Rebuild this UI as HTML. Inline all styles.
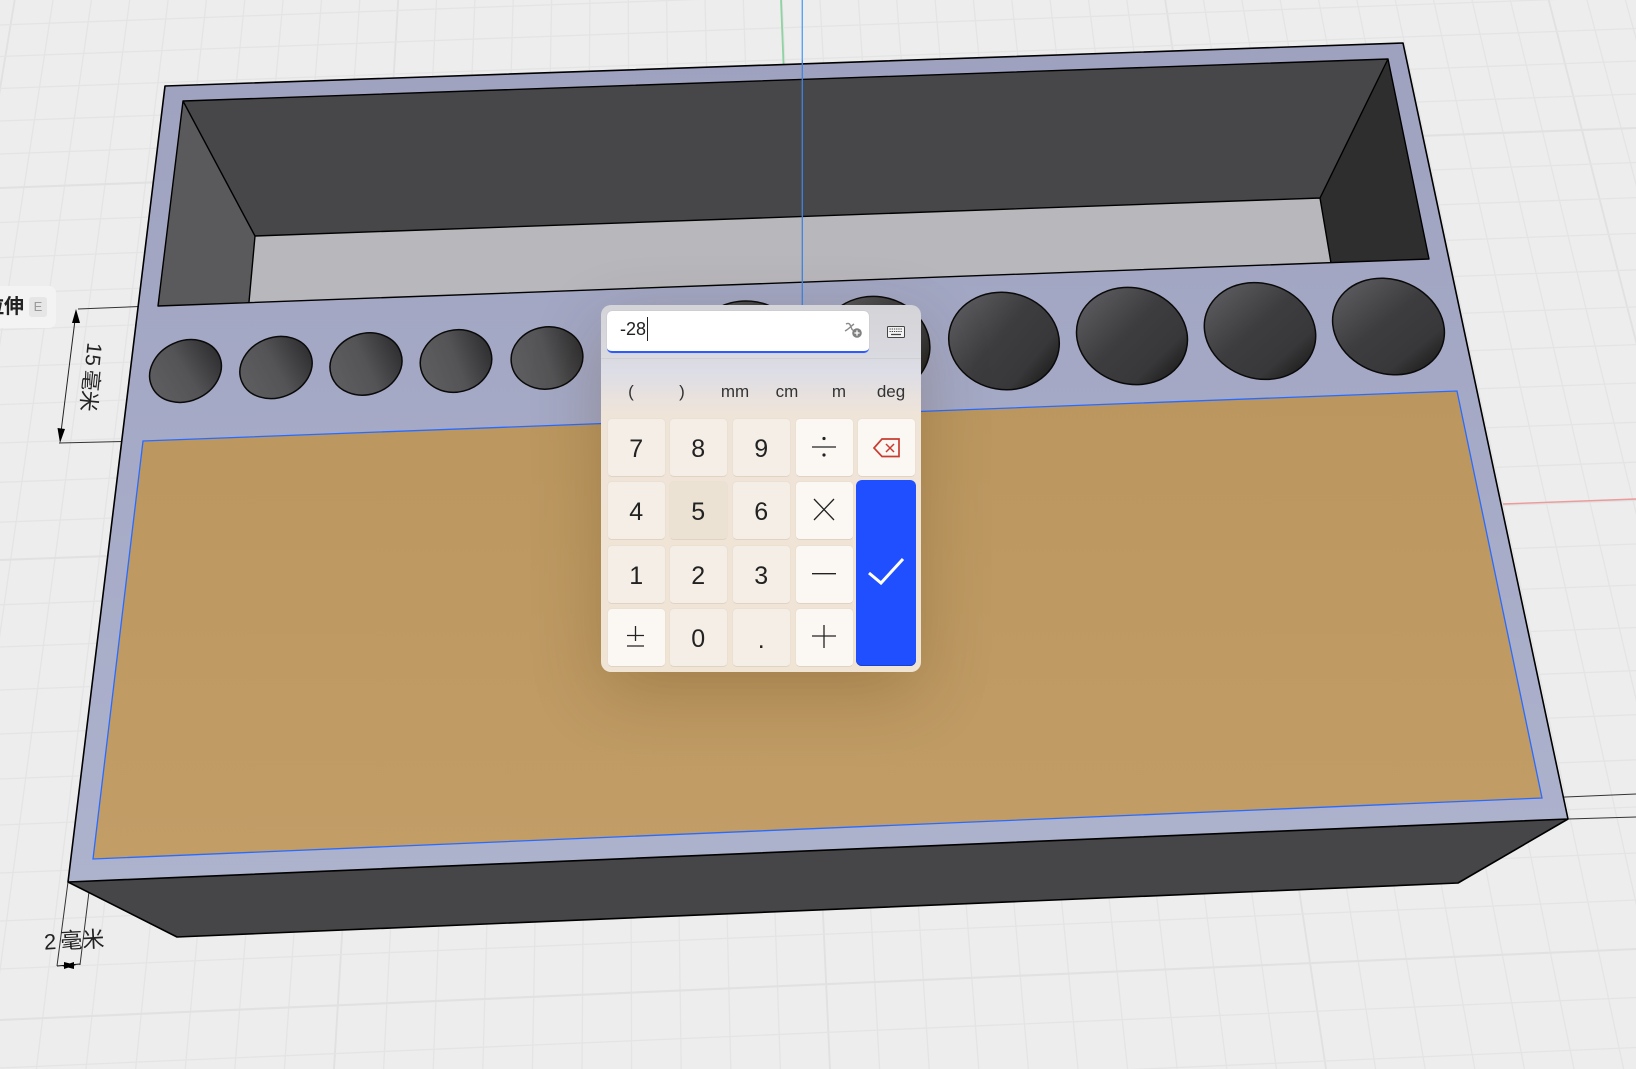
<!DOCTYPE html>
<html><head><meta charset="utf-8"><style>
html,body{margin:0;padding:0;width:1636px;height:1069px;overflow:hidden;background:#ededed}
body{position:relative;font-family:"Liberation Sans","Noto Sans CJK SC",sans-serif}
svg.s{position:absolute;left:0;top:0}
.t{position:absolute;white-space:nowrap;color:#222}
#panel{position:absolute;left:601px;top:305px;width:320px;height:367px;border-radius:10px;overflow:hidden;background:linear-gradient(180deg,#d4d4d8 0,#d8d8de 12%,#dcdde6 18%,#e8e1de 25%,#efe4d8 30%,#f0e4d5 100%);box-shadow:0 22px 70px rgba(70,40,0,.24)}
.k{position:absolute;width:58.5px;height:59px;box-sizing:border-box;border-radius:5px;background:#f4eee6;border:1px solid #ebe0d2;border-bottom-color:#dfd3c3;color:#222;font-size:25px;line-height:60px;text-align:center}
.o{background:#fbf8f4}
.u{position:absolute;top:77px;font-size:17px;line-height:20px;color:#333;transform:translateX(-50%)}
</style></head><body>
<svg class="s" width="1636" height="1069" viewBox="0 0 1636 1069" fill="none">
<defs>
<linearGradient id="band" x1="0" y1="43" x2="0" y2="882" gradientUnits="userSpaceOnUse"><stop offset="0" stop-color="#9ea2bf"/><stop offset="1" stop-color="#adb2cd"/></linearGradient>
<linearGradient id="or" x1="0" y1="391" x2="0" y2="859" gradientUnits="userSpaceOnUse"><stop offset="0" stop-color="#bb975f"/><stop offset="1" stop-color="#c29d66"/></linearGradient>
<linearGradient id="lg" x1="0" y1=".25" x2="1" y2=".75"><stop offset="0" stop-color="#5c5c60"/><stop offset=".45" stop-color="#3d3d3f"/><stop offset=".78" stop-color="#38383a"/><stop offset="1" stop-color="#1d1d1d"/></linearGradient>
<linearGradient id="sm" x1="0" y1=".55" x2="1" y2=".45"><stop offset="0" stop-color="#5e5e60"/><stop offset=".5" stop-color="#545456"/><stop offset="1" stop-color="#303032"/></linearGradient>
</defs>
<path stroke="#e4e4e4" stroke-width="1.3" d="M53 0L-112.4 1069M91.4 0L-62.8 1069M129.7 0L-13.2 1069M168.1 0L36.4 1069M206.4 0L86 1069M244.8 0L135.6 1069M283.1 0L185.2 1069M321.5 0L234.8 1069M359.8 0L284.4 1069M436.5 0L383.6 1069M474.9 0L433.2 1069M513.2 0L482.8 1069M551.6 0L532.4 1069M589.9 0L582 1069M628.3 0L631.6 1069M666.6 0L681.2 1069M705 0L730.8 1069M743.3 0L780.4 1069M820 0L879.6 1069M858.4 0L929.2 1069M896.7 0L978.8 1069M935.1 0L1028.4 1069M973.4 0L1078 1069M1011.8 0L1127.6 1069M1050.1 0L1177.2 1069M1088.5 0L1226.8 1069M1126.8 0L1276.4 1069M1203.5 0L1375.6 1069M1241.9 0L1425.2 1069M1280.2 0L1474.8 1069M1318.6 0L1524.4 1069M1356.9 0L1574 1069M1395.3 0L1623.6 1069M1433.6 0L1673.2 1069M1472 0L1722.8 1069M1510.3 0L1772.4 1069M1587 0L1871.6 1069M1625.4 0L1921.2 1069"/>
<path stroke="#e1e1e1" stroke-width="1.9" d="M14.7 0L-162 1069M398.2 0L334 1069M781.7 0L830 1069M1165.2 0L1326 1069M1548.7 0L1822 1069"/>
<path stroke="#e4e4e4" stroke-width="1.3" d="M0 25L1636 -35M0 56.5L1636 -3.5M0 88.5L1636 28.5M0 121L1636 61M0 154L1636 94M0 222.5L1636 162.5M0 257.6L1636 197.6M0 293.4L1636 233.4M0 329.8L1636 269.8M0 366.9L1636 306.9M0 404.6L1636 344.6M0 443L1636 383M0 482.3L1636 422.3M0 522.2L1636 462.2M0 604.8L1636 544M0 647L1636 585M0 690L1636 627.5M0 734L1636 670.6M0 779L1636 714.7M0 825L1636 759.8M0 873L1636 807M0 921L1636 853M0 969L1636 900M0 1068L1636 997.5M0 1119L1636 1047.5"/>
<path stroke="#e1e1e1" stroke-width="2.1" d="M0 188L1636 128M0 560L1636 500M0 1020L1636 949"/>
<path d="M1503 504L1636 499" stroke="#ec9a9a" stroke-width="1.4"/>
<path d="M781 0L783.5 64" stroke="#8ed3a2" stroke-width="1.8"/>
<path d="M78 309L140 306.5M59 443L143 441M1542 798L1636 794M1568 819L1636 817M68 882L57 966M93 859L80 965" stroke="#333" stroke-width="1"/>
<path d="M76 312L60 440" stroke="#222" stroke-width="1"/>
<path d="M76 309L72 323L80 323ZM60 443L57.5 428L65 429Z" fill="#000"/>
<path d="M57 966L80 964" stroke="#111" stroke-width="1"/>
<path d="M62 966L74 962L74 969Z" fill="#000"/>
<path d="M76 965L64 962L64 969Z" fill="#000"/>

<path d="M165 86L1403 43L1568 819L68 882Z" fill="url(#band)"/>
<path d="M183 101L1388 59L1320 198L255 236Z" fill="#47474a"/>
<path d="M183 101L255 236L249 302L158 306Z" fill="#5a5a5c"/>
<path d="M1388 59L1429 259L1331 263L1320 198Z" fill="#2e2e2e"/>
<path d="M255 236L1320 198L1331 263L249 302Z" fill="#b8b7bb"/>
<path d="M183 101L1388 59L1429 259L158 306ZM183 101L255 236L1320 198L1388 59M255 236L249 302M1320 198L1331 263" stroke="#000" stroke-width="1.4" stroke-linejoin="round"/>
<path d="M143 441L1457 391L1542 798L93 859Z" fill="url(#or)" stroke="#2a6bff" stroke-width="1.3"/>
<path d="M68 882L1568 819L1458 883L177 937Z" fill="#464648"/>
<path d="M165 86L1403 43L1568 819L1458 883L177 937L68 882ZM68 882L1568 819" stroke="#000" stroke-width="1.6" stroke-linejoin="round"/>

<g stroke="#0a0a0a" stroke-width="1.5" fill="url(#sm)">
<ellipse cx="185.5" cy="371" rx="37" ry="30" transform="rotate(-25 185.5 371)"/>
<ellipse cx="276" cy="367.5" rx="37" ry="30" transform="rotate(-22 276 367.5)"/>
<ellipse cx="366" cy="364" rx="36.5" ry="30.5" transform="rotate(-18 366 364)"/>
<ellipse cx="456" cy="361" rx="36" ry="31" transform="rotate(-14 456 361)"/>
<ellipse cx="547" cy="358" rx="36" ry="31" transform="rotate(-10 547 358)"/>
</g>
<g stroke="#0a0a0a" stroke-width="1.5" fill="url(#lg)">
<ellipse cx="747" cy="350" rx="55" ry="49" transform="rotate(5 747 350)"/>
<ellipse cx="875" cy="345.5" rx="55" ry="49" transform="rotate(8 875 345.5)"/>
<ellipse cx="1004" cy="341" rx="55.5" ry="48.5" transform="rotate(10 1004 341)"/>
<ellipse cx="1132" cy="336" rx="56" ry="48" transform="rotate(15 1132 336)"/>
<ellipse cx="1260" cy="331" rx="56.5" ry="47.5" transform="rotate(18 1260 331)"/>
<ellipse cx="1388.5" cy="326.5" rx="57" ry="47" transform="rotate(20 1388.5 326.5)"/>
</g>
<path d="M802.3 0V60" stroke="#5aa2f2" stroke-width="1.4"/>
<path d="M802.3 60V306" stroke="#3f84dc" stroke-width="1.3"/>
</svg>

<div style="position:absolute;left:-20px;top:286px;width:76px;height:42px;background:#f3f3f3;border-radius:7px"></div>
<div class="t" style="left:-16px;top:295px;font-size:20px;line-height:24px;font-weight:700;color:#222">拉伸</div>
<div class="t" style="left:29px;top:297px;width:18px;height:20px;background:#e6e6e6;border-radius:3px;color:#9a9a9a;font-size:13px;line-height:20px;text-align:center">E</div>
<div class="t" style="left:55px;top:365px;width:70px;text-align:center;font-size:21px;line-height:24px;word-spacing:-2px;transform:rotate(96deg);color:#222">15 毫米</div>
<div class="t" style="left:44px;top:928px;font-size:22px;line-height:26px;word-spacing:-2px;transform:rotate(-3deg);color:#222">2 毫米</div>

<div id="panel">
<div style="position:absolute;left:0;top:53px;width:320px;height:1px;background:#cfcfd4"></div>
<div style="position:absolute;left:6px;top:6px;width:262px;height:41.5px;box-sizing:border-box;background:#fff;border-radius:5px;border-bottom:2.2px solid #2a5cff;box-shadow:0 0 1px rgba(0,0,0,.2)"></div>
<div class="t" style="left:19px;top:12px;font-size:18px;line-height:24px;color:#222">-28</div>
<div style="position:absolute;left:45.5px;top:12px;width:1px;height:24px;background:#222"></div>
<svg style="position:absolute;left:243px;top:16px" width="20" height="20" viewBox="0 0 20 20" fill="none"><path d="M2 3C5 1.5 6 3 7 6C8 9 9 10 11 9M10 3C7 5 5 8 1 10" stroke="#8a8a8a" stroke-width="1.4"/><circle cx="13" cy="12" r="4.8" fill="#808080"/><path d="M10.4 12H15.6M13 9.4V14.6" stroke="#fff" stroke-width="1.3"/></svg>
<svg style="position:absolute;left:286px;top:21px" width="18" height="12" viewBox="0 0 18 12" fill="none"><rect x=".5" y=".5" width="17" height="11" rx="1" stroke="#444" fill="#f4f4f4"/><path d="M2.5 3H15.5M2.5 5.5H15.5" stroke="#444" stroke-width="1" stroke-dasharray="1.3 .9"/><path d="M4 8.5H14" stroke="#444" stroke-width="1.2"/></svg>

<div class="u" style="left:30px">(</div>
<div class="u" style="left:81px">)</div>
<div class="u" style="left:134px">mm</div>
<div class="u" style="left:186px">cm</div>
<div class="u" style="left:238px">m</div>
<div class="u" style="left:290px">deg</div>

<div class="k" style="left:6px;top:113px">7</div>
<div class="k" style="left:68px;top:113px">8</div>
<div class="k" style="left:131px;top:113px">9</div>
<div class="k o" style="left:194px;top:113px"></div>
<div class="k o" style="left:256px;top:113px"></div>

<div class="k" style="left:6px;top:176px">4</div>
<div class="k" style="left:68px;top:176px;background:#ebe2d3">5</div>
<div class="k" style="left:131px;top:176px">6</div>
<div class="k o" style="left:194px;top:176px"></div>

<div class="k" style="left:6px;top:240px">1</div>
<div class="k" style="left:68px;top:240px">2</div>
<div class="k" style="left:131px;top:240px">3</div>
<div class="k o" style="left:194px;top:240px"></div>

<div class="k o" style="left:6px;top:303px"></div>
<div class="k" style="left:68px;top:303px">0</div>
<div class="k" style="left:131px;top:303px;line-height:62px">.</div>
<div class="k o" style="left:194px;top:303px"></div>

<div style="position:absolute;left:255px;top:175px;width:60px;height:186px;border-radius:6px;background:#1f4fff;box-shadow:inset 0 -1px 0 #1a3fc8"></div>

<svg style="position:absolute;left:0;top:0" width="320" height="367" viewBox="601 305 320 367" fill="none">
<path d="M812 447H836M814 499L834 520M834 499L814 520M812 573.7H836M812 636H836M824 625V648M627 635.5H644M635.5 626V641M627 646H644" stroke="#222" stroke-width="1.3"/>
<circle cx="824" cy="438.5" r="1.6" fill="#222"/><circle cx="824" cy="455" r="1.6" fill="#222"/>
<path d="M874 448L882 439H899V456.5H882Z" stroke="#c83c32" stroke-width="1.7" stroke-linejoin="miter"/>
<path d="M886 444L894 452M894 444L886 452" stroke="#c83c32" stroke-width="1.5"/>
<path d="M869 573L881 583L903 559" stroke="#fff" stroke-width="3"/>
</svg>
</div>
</body></html>
